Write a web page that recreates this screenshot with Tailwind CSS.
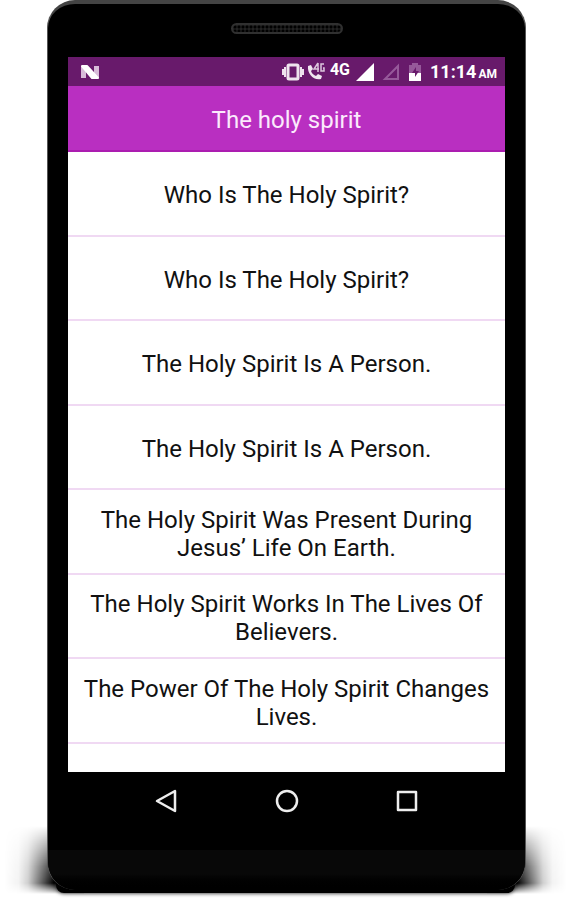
<!DOCTYPE html>
<html lang="en">
  <head>
    <meta charset="UTF-8" />
    <meta name="viewport" content="width=device-width, initial-scale=1.0" />
    <title>The holy spirit</title>
    <script src="https://cdn.jsdelivr.net/npm/@tailwindcss/browser@4"></script>
  </head>
  <body class="bg-white font-['Roboto',sans-serif]">
    <div class="relative min-h-screen pl-[47px] pr-[45px]">
      <!-- Shadow on the floor -->
      <div class="absolute left-1 top-[826px] h-[68px] w-[80px] [background-image:linear-gradient(to_right,transparent,#0000000c_18%,#00000030_30%,#000000b0_50%,#000_62%)] [mask-image:linear-gradient(transparent,#0006_30%,#000c_60%,#000_84%,transparent_100%)]"></div>
      <div class="absolute right-1 top-[826px] h-[68px] w-[80px] [background-image:linear-gradient(to_left,transparent,#0000000c_18%,#00000030_30%,#000000b0_50%,#000_62%)] [mask-image:linear-gradient(transparent,#0006_30%,#000c_60%,#000_84%,transparent_100%)]"></div>
      <div class="absolute inset-x-14 top-[869px] h-6 rounded-b-lg bg-black shadow-[0_0_4px_#000]"></div>

      <!-- Phone -->
      <div class="relative flex flex-col rounded-[28px] border-x border-t-4 border-x-[#555] border-t-[#444] bg-black">
        <div class="flex h-[53px] justify-center pt-[19px]">
          <div class="h-[11px] w-28 rounded-full border-2 border-[#303030] bg-[radial-gradient(circle,#000_1px,#222_2px)] bg-size-[4px_4px]"></div>
        </div>

        <div class="mx-5 flex flex-col bg-white">
          <div class="flex h-[29px] items-center bg-[#681a6b] pl-3 pr-2 text-white">
            <svg class="h-4 w-5" viewBox="0 0 20 16">
              <path d="M1 2h5v12H1zM14 2h5v12h-5z" fill="#d8bcd9" />
              <path d="M2 2h5l11 12h-6z" fill="#fff" stroke="#fff" stroke-width="2" stroke-linejoin="round" />
            </svg>
            <svg class="ml-auto h-5 w-6" viewBox="0 0 24 20" fill="none" stroke="#eee3ee" stroke-width="2">
              <rect x="7" y="3" width="10" height="14" rx="1" stroke-width="3" />
              <path d="M4 5v10M20 5v10M2 7v6M22 7v6" />
            </svg>
            <svg class="ml-px h-5 w-5" viewBox="0 0 20 20">
              <path d="M2 4l3-1 2 4-2 2c1 3 3 4 5 5l2-2 4 2-1 3c-7 2-14-5-13-13z" fill="#f0e6f0" />
              <path d="M12 1L8 7h5M12 1v9M18 2h-3v7h3V6h-1" fill="none" stroke="#dcc6dd" stroke-width="1.5" />
            </svg>
            <span class="ml-1 h-6 text-base font-bold leading-5">4G</span>
            <svg class="ml-[6px] h-[18px] w-[18px]" viewBox="0 0 18 18"><path d="M18 0v18H0z" fill="#fff" /></svg>
            <svg class="ml-2 h-[18px] w-[18px]" viewBox="0 0 18 18"><path d="M16 3v13H3z" fill="none" stroke="#96599a" stroke-width="2" /></svg>
            <svg class="ml-2 h-[18px] w-[14px]" viewBox="0 0 14 18">
              <path d="M1 2h3V0h6v2h3v8H1z" fill="#96599a" />
              <path d="M1 10h12v8H1z" fill="#fff" />
              <path d="M8 4l-4 6h3v4l4-6H8z" fill="#681a6b" />
            </svg>
            <div class="ml-2 flex items-baseline gap-[2px] font-bold">
              <span class="text-lg leading-7">11:14</span>
              <span class="text-xs">AM</span>
            </div>
          </div>

          <header class="flex h-[66px] items-center justify-center border-b-2 border-[#ab1db0] bg-[#b92fc1]">
            <h1 class="pt-1 text-2xl text-[#fbeafc]">The holy spirit</h1>
          </header>

          <ul class="flex h-[592px] flex-col text-center text-2xl leading-7 text-[#111]">
            <li class="flex flex-1 items-center justify-center border-b-2 border-[#f0d9f3] px-2 pt-1">Who Is The Holy Spirit?</li>
            <li class="flex flex-1 items-center justify-center border-b-2 border-[#f0d9f3] px-2 pt-1">Who Is The Holy Spirit?</li>
            <li class="flex flex-1 items-center justify-center border-b-2 border-[#f0d9f3] px-2 pt-1">The Holy Spirit Is A Person.</li>
            <li class="flex flex-1 items-center justify-center border-b-2 border-[#f0d9f3] px-2 pt-1">The Holy Spirit Is A Person.</li>
            <li class="flex flex-1 items-center justify-center border-b-2 border-[#f0d9f3] px-2 pt-1">The Holy Spirit Was Present During Jesus’ Life On Earth.</li>
            <li class="flex flex-1 items-center justify-center border-b-2 border-[#f0d9f3] px-2 pt-1">The Holy Spirit Works In The Lives Of Believers.</li>
            <li class="flex flex-1 items-center justify-center border-b-2 border-[#f0d9f3] px-2 pt-1">The Power Of The Holy Spirit Changes Lives.</li>
          </ul>
          <div class="h-7"></div>
        </div>

        <nav class="mx-[106px] flex h-[58px] items-center justify-between">
          <button type="button" aria-label="Back">
            <svg class="h-6 w-6" viewBox="0 0 24 24" fill="none" stroke="#eee" stroke-width="2.5" stroke-linejoin="round"><path d="M21 2v20L3 12z" /></svg>
          </button>
          <button type="button" aria-label="Home">
            <svg class="h-6 w-6" viewBox="0 0 24 24" fill="none" stroke="#eee" stroke-width="2.5"><circle cx="12" cy="12" r="10" /></svg>
          </button>
          <button type="button" aria-label="Recent apps">
            <svg class="h-6 w-6" viewBox="0 0 24 24" fill="none" stroke="#eee" stroke-width="2.5" stroke-linejoin="round"><path d="M3 3h18v18H3z" /></svg>
          </button>
        </nav>
        <div class="mt-5 h-10 rounded-b-[28px] bg-linear-to-b from-[#080808] from-60% to-black"></div>
      </div>
    </div>
  </body>
</html>
